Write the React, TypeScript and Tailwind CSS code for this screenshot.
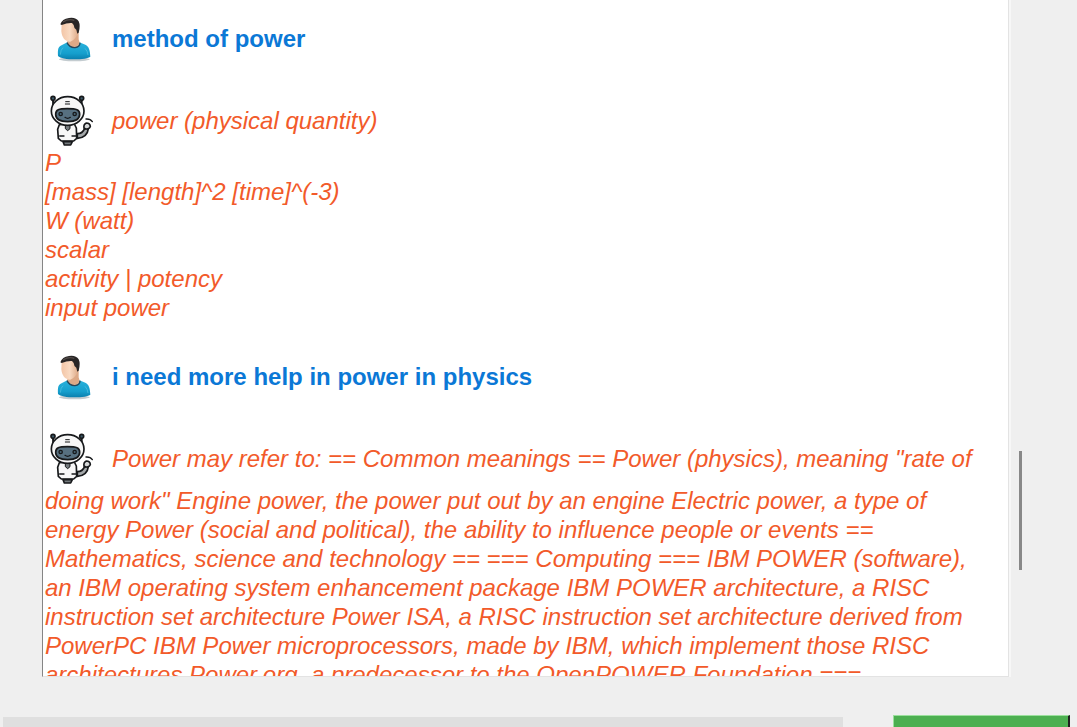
import React from "react";

function UserAvatar() {
  return (
    <svg viewBox="15 36 162 162" className="-mt-1 mr-[13px] inline-block size-[54px] align-middle" aria-hidden="true">
      <defs>
        <linearGradient id="shirt" x1="0" y1="0" x2="0" y2="1">
          <stop offset="0" stopColor="#2ab2dc" />
          <stop offset="0.65" stopColor="#159fcd" />
          <stop offset="1" stopColor="#0a7fae" />
        </linearGradient>
        <linearGradient id="skin" x1="0" y1="0" x2="1" y2="0">
          <stop offset="0" stopColor="#f3c5a6" />
          <stop offset="0.5" stopColor="#f9dac2" />
          <stop offset="1" stopColor="#dda987" />
        </linearGradient>
      </defs>
      <ellipse cx="103" cy="178" rx="46" ry="6" fill="#c4ccd0" />
      <path d="M54 168 C53 148 54 140 66 135 L82 127 L118 127 L136 134 C147 139 150 150 151 170 C141 180 66 182 54 168 Z" fill="url(#shirt)" />
      <path d="M82 108 L82 128 Q92 144 107 141 Q118 138 119 128 L116 118 L116 94 Z" fill="#dda987" />
      <path d="M81 128 Q89 144 105 143 Q120 141 120 128" fill="none" stroke="#28465a" strokeWidth="4" />
      <path d="M65 73 L101 66 Q116 80 115 97 Q108 119 91 125 C76 126 65 112 64 93 Z" fill="url(#skin)" />
      <path d="M61 73 Q66 57 87 54 Q108 51 116 64 Q122 77 116 98 L112 101 L109 89 Q102 86 101 75 L96 69 Q82 68 65 75 Z" fill="#282525" />
      <path d="M69 66 Q86 55 103 61" fill="none" stroke="#534c49" strokeWidth="4" />
      <path d="M61 164 Q62 148 69 143 M135 145 Q143 153 144 165" fill="none" stroke="#5bc7e5" strokeWidth="3" opacity="0.6" />
    </svg>
  );
}

function RobotAvatar() {
  return (
    <svg viewBox="15 27 162 162" className="-mt-1 mr-[13px] inline-block size-[54px] align-middle" aria-hidden="true">
      <g stroke="#17191b" strokeWidth="5" strokeLinecap="round" strokeLinejoin="round">
        <path d="M112 146 Q128 146 134 130 L145 131 Q142 158 112 160 Z" fill="#a4a8aa" />
        <path d="M132 129 Q130 118 139 114 Q150 114 151 124 Q149 132 137 132 Z" fill="#d5d7d8" />
        <path d="M138 102 Q151 101 157 110" fill="none" strokeWidth="4" />
        <path d="M39 44 L40 70 M125 44 L125 70" fill="none" strokeWidth="6" />
        <circle cx="39" cy="40" r="6" fill="#3c5969" />
        <circle cx="125" cy="40" r="6" fill="#3c5969" />
        <path d="M58 119 L53 133 L55 160 L64 168 L101 168 L110 160 L109 129 L103 117 Z" fill="#f7f7f7" />
        <path d="M69 170 L73 180 L92 180 L97 170 Z" fill="#747a7d" />
        <ellipse cx="83" cy="78" rx="49" ry="43" fill="#f7f7f7" />
        <path d="M47 88 C47 74 56 71 82 71 C110 71 119 74 119 88 C119 103 107 110 83 110 C57 110 47 102 47 88 Z" fill="#577080" />
        <path d="M77 50 L88 50 M76 57 L89 57" fill="none" strokeWidth="3" />
        <circle cx="62" cy="87" r="5" fill="#496777" strokeWidth="4" />
        <circle cx="104" cy="87" r="5" fill="#496777" strokeWidth="4" />
        <path d="M75 97 Q83 103 91 97" fill="none" strokeWidth="4" />
        <path d="M76 123 L76 131 L83 137 L90 131 L90 123 Z" fill="#747a7d" strokeWidth="3" />
        <path d="M59 153 L72 153 M96 153 L107 153" fill="none" strokeWidth="4" />
      </g>
    </svg>
  );
}

function UserMessage({ text }: { text: string }) {
  return (
    <p className="font-bold text-[#0b78d6]">
      <UserAvatar />
      {text}
    </p>
  );
}

function BotMessage({ text }: { text: string }) {
  return (
    <p className="whitespace-pre-line text-[#f25a2a] italic">
      <RobotAvatar />
      {text}
    </p>
  );
}

const quantity = `power (physical quantity)
P
[mass] [length]^2 [time]^(-3)
W (watt)
scalar
activity | potency
input power`;

const meanings =
  'Power may refer to: == Common meanings == Power (physics), meaning "rate of doing work" Engine power, the power put out by an engine Electric power, a type of energy Power (social and political), the ability to influence people or events == Mathematics, science and technology == === Computing === IBM POWER (software), an IBM operating system enhancement package IBM POWER architecture, a RISC instruction set architecture Power ISA, a RISC instruction set architecture derived from PowerPC IBM Power microprocessors, made by IBM, which implement those RISC architectures Power.org, a predecessor to the OpenPOWER Foundation ===';

export default function App() {
  return (
    <div className="flex h-screen flex-col overflow-hidden bg-[#efefef] font-['Liberation_Sans',Arial,sans-serif]">
      <div className="flex min-h-0 flex-1 pl-[42px]">
        <main className="min-w-0 flex-1 overflow-hidden border-r border-b border-l border-r-[#e3e3e3] border-b-[#e3e3e3] border-l-[#858585] bg-white pt-4 pr-4 pl-0.5 text-[24px] leading-[29px]">
          <div className="flex flex-col gap-8">
            <UserMessage text="method of power" />
            <BotMessage text={quantity} />
            <UserMessage text="i need more help in power in physics" />
            <BotMessage text={meanings} />
          </div>
        </main>
        <div className="flex w-[68px] shrink-0 flex-col border-l-2 border-[#f7f7f7] pl-2">
          <div className="mt-[451px] h-[119px] w-[3px] bg-[#888888]" />
        </div>
      </div>
      <form className="mt-[38px] flex h-3 shrink-0 items-start overflow-hidden pr-[7px] pl-[3px]" onSubmit={(e) => e.preventDefault()}>
        <input
          type="text"
          aria-label="Message"
          className="mt-0.5 mr-[50px] h-12 min-w-0 flex-1 bg-[#dfdfdf] px-2 text-[24px] outline-none"
        />
        <button
          type="submit"
          aria-label="Send"
          className="h-12 w-[177px] shrink-0 border-t border-r-2 border-l border-t-[#9be09d] border-r-[#202020] border-l-[#9be09d] bg-[#4caf50]"
        />
      </form>
    </div>
  );
}
